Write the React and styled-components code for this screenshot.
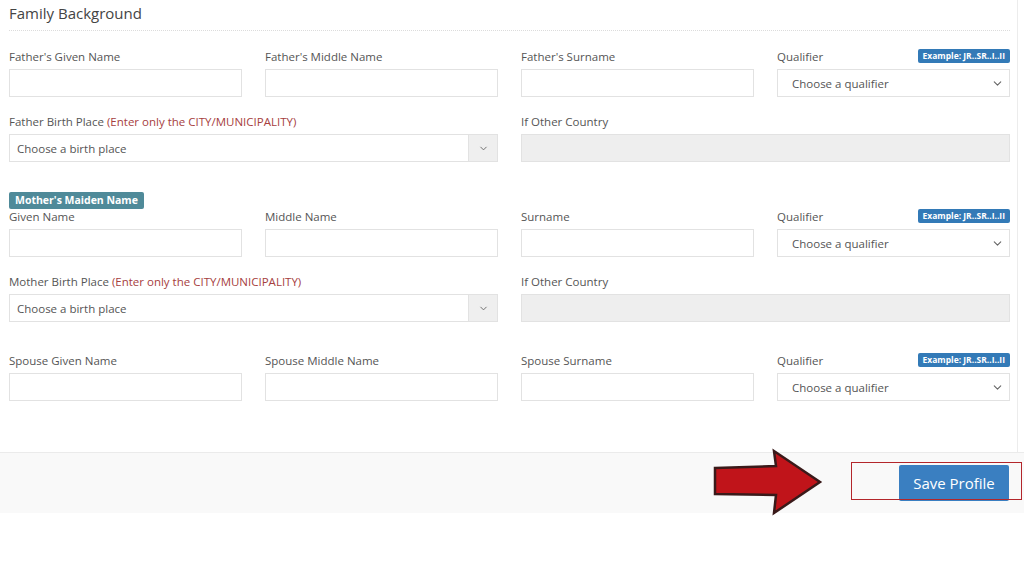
import React from 'react'
import styled, { createGlobalStyle } from 'styled-components'
import { ChevronDown } from 'lucide-react'

const GlobalStyle = createGlobalStyle`
  body {
    margin: 0;
    background: #fff;
    font-family: "Open Sans", "Liberation Sans", sans-serif;
    color: #555;
  }
`

const Page = styled.div`
  width: 1024px;
  height: 576px;
  position: relative;
  background: #fff;
`

const Panel = styled.div`
  width: 1001px;
  padding: 0 7px 51px 9px;
  border-right: 1px solid #ececec;
`

const Heading = styled.div`
  font-size: 15px;
  line-height: 20px;
  padding-top: 3px;
  padding-bottom: 7px;
  color: #444;
  border-bottom: 1px dotted #dcdcdc;
  margin-bottom: 16px;
`

const Row = styled.div`
  display: grid;
  grid-template-columns: repeat(4, 1fr);
  column-gap: 23px;
  margin-top: ${p => p.$gap || 0}px;
`

const Field = styled.div`
  grid-column: span ${p => p.$span || 1};
  display: flex;
  flex-direction: column;
`

const LabelRow = styled.div`
  display: flex;
  align-items: center;
  justify-content: space-between;
  height: 18px;
  margin-bottom: 4px;
  font-size: 11.5px;
  color: #555;
  white-space: nowrap;
`

const Hint = styled.span`
  color: #a6403e;
`

const Example = styled.span`
  background: #337ab7;
  color: #fff;
  font-size: 8.5px;
  font-weight: 700;
  line-height: 14px;
  padding: 0 5px;
  border-radius: 2px;
`

const Input = styled.div`
  height: 28px;
  box-sizing: border-box;
  border: 1px solid #e2e2e2;
  background: ${p => (p.$disabled ? '#eeeeee' : '#fff')};
`

const Select = styled.div`
  height: 28px;
  box-sizing: border-box;
  border: 1px solid #e2e2e2;
  display: flex;
  align-items: center;
  justify-content: space-between;
  padding: 0 5px 0 14px;
  font-size: 11.5px;
  color: #555;
`

const Combo = styled.div`
  height: 28px;
  display: flex;
`

const ComboText = styled.div`
  flex: 1;
  box-sizing: border-box;
  border: 1px solid #e2e2e2;
  display: flex;
  align-items: center;
  padding-left: 7px;
  font-size: 11.5px;
  color: #555;
`

const ComboAddon = styled.div`
  width: 29px;
  box-sizing: border-box;
  border: 1px solid #e2e2e2;
  border-left: none;
  background: #efefef;
  display: flex;
  align-items: center;
  justify-content: center;
  color: #777;
`

const Badge = styled.div`
  display: table;
  background: #4f8a99;
  color: #fff;
  font-size: 10.5px;
  font-weight: 700;
  line-height: 17px;
  padding: 0 6px;
  border-radius: 2px;
  margin-top: 30px;
  margin-bottom: -2px;
`

const Footer = styled.div`
  height: 61px;
  box-sizing: border-box;
  background: #f9f9f9;
  border-top: 1px solid #ebebeb;
  display: flex;
  justify-content: flex-end;
  align-items: flex-start;
  padding: 12px 15px 0 0;
`

const SaveButton = styled.button`
  width: 110px;
  height: 36px;
  border: none;
  border-radius: 2px;
  background: #3a7fc1;
  color: #fff;
  font-family: "Open Sans", "Liberation Sans", sans-serif;
  font-size: 15px;
`

const Highlight = styled.div`
  position: absolute;
  left: 851px;
  top: 462px;
  width: 171px;
  height: 38px;
  border: 1.5px solid #b3262b;
  box-sizing: border-box;
`

const Arrow = styled.svg`
  position: absolute;
  left: 712px;
  top: 448px;
`

const Label = ({ children, example }) => (
  <LabelRow>
    <span>{children}</span>
    {example && <Example>Example: JR..SR..I..II</Example>}
  </LabelRow>
)

const Chevron = ({ size = 11 }) => <ChevronDown size={size} strokeWidth={2} color="#666" />

const TextField = ({ label }) => (
  <Field>
    <Label>{label}</Label>
    <Input />
  </Field>
)

const Qualifier = () => (
  <Field>
    <Label example>Qualifier</Label>
    <Select>
      <span>Choose a qualifier</span>
      <Chevron size={13} />
    </Select>
  </Field>
)

const BirthPlace = ({ who }) => (
  <Row $gap={15}>
    <Field $span={2}>
      <Label>
        {who} Birth Place <Hint>(Enter only the CITY/MUNICIPALITY)</Hint>
      </Label>
      <Combo>
        <ComboText>Choose a birth place</ComboText>
        <ComboAddon>
          <Chevron />
        </ComboAddon>
      </Combo>
    </Field>
    <Field $span={2}>
      <Label>If Other Country</Label>
      <Input $disabled />
    </Field>
  </Row>
)

const App = () => (
  <Page>
    <GlobalStyle />
    <Panel>
      <Heading>Family Background</Heading>
      <Row>
        <TextField label="Father's Given Name" />
        <TextField label="Father's Middle Name" />
        <TextField label="Father's Surname" />
        <Qualifier />
      </Row>
      <BirthPlace who="Father" />
      <Badge>Mother's Maiden Name</Badge>
      <Row>
        <TextField label="Given Name" />
        <TextField label="Middle Name" />
        <TextField label="Surname" />
        <Qualifier />
      </Row>
      <BirthPlace who="Mother" />
      <Row $gap={29}>
        <TextField label="Spouse Given Name" />
        <TextField label="Spouse Middle Name" />
        <TextField label="Spouse Surname" />
        <Qualifier />
      </Row>
    </Panel>
    <Footer>
      <SaveButton>Save Profile</SaveButton>
    </Footer>
    <Highlight />
    <Arrow width="112" height="68" viewBox="0 0 112 68">
      <polygon
        points="3,20 64,18 62,3 108,34 62,65 64,47 3,46"
        fill="#c0141a"
        stroke="#3a1a1a"
        strokeWidth="2.5"
        strokeLinejoin="miter"
      />
    </Arrow>
  </Page>
)

export default App
